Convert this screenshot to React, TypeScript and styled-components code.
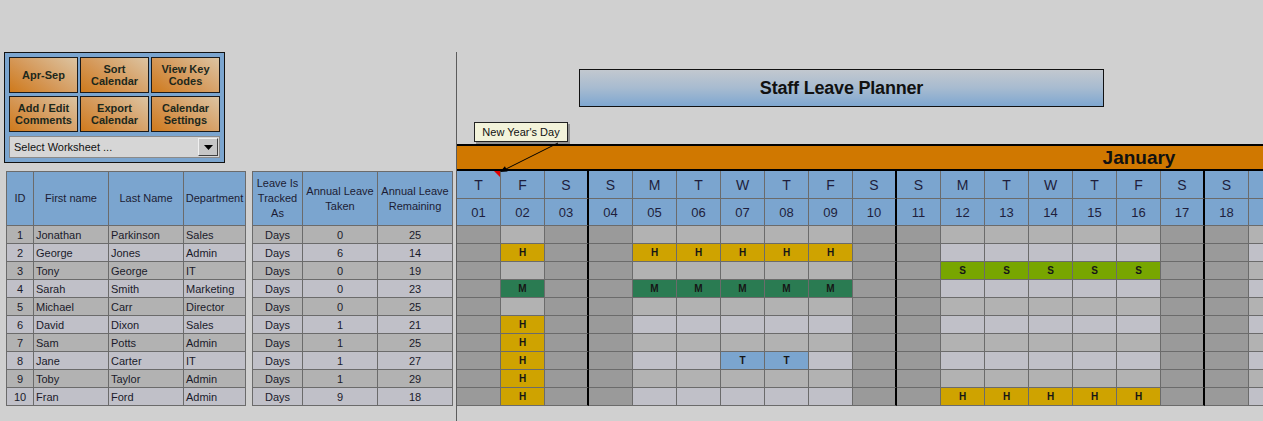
import React from "react";
import styled, { createGlobalStyle, css } from "styled-components";

type Code = "H" | "M" | "S" | "T";

type Staff = {
  id: number;
  first: string;
  last: string;
  dept: string;
  taken: number;
  remaining: number;
  leave: Record<number, Code>;
};

const span = (from: number, to: number, code: Code) => {
  const out: Record<number, Code> = {};
  for (let d = from; d <= to; d++) out[d] = code;
  return out;
};

const staff: Staff[] = [
  { id: 1, first: "Jonathan", last: "Parkinson", dept: "Sales", taken: 0, remaining: 25, leave: {} },
  { id: 2, first: "George", last: "Jones", dept: "Admin", taken: 6, remaining: 14, leave: { 2: "H", ...span(5, 9, "H") } },
  { id: 3, first: "Tony", last: "George", dept: "IT", taken: 0, remaining: 19, leave: span(12, 16, "S") },
  { id: 4, first: "Sarah", last: "Smith", dept: "Marketing", taken: 0, remaining: 23, leave: { 2: "M", ...span(5, 9, "M") } },
  { id: 5, first: "Michael", last: "Carr", dept: "Director", taken: 0, remaining: 25, leave: {} },
  { id: 6, first: "David", last: "Dixon", dept: "Sales", taken: 1, remaining: 21, leave: { 2: "H" } },
  { id: 7, first: "Sam", last: "Potts", dept: "Admin", taken: 1, remaining: 25, leave: { 2: "H" } },
  { id: 8, first: "Jane", last: "Carter", dept: "IT", taken: 1, remaining: 27, leave: { 2: "H", 7: "T", 8: "T" } },
  { id: 9, first: "Toby", last: "Taylor", dept: "Admin", taken: 1, remaining: 29, leave: { 2: "H" } },
  { id: 10, first: "Fran", last: "Ford", dept: "Admin", taken: 9, remaining: 18, leave: { 2: "H", ...span(12, 16, "H") } },
];

const LETTERS = ["S", "M", "T", "W", "T", "F", "S"];
// January starts on a Thursday
const days = Array.from({ length: 31 }, (_, i) => {
  const wd = (4 + i) % 7;
  return {
    day: i + 1,
    num: String(i + 1).padStart(2, "0"),
    letter: LETTERS[wd],
    sat: wd === 6,
    dark: wd === 0 || wd === 6 || i === 0,
  };
});

const codeColors: Record<Code, string> = {
  H: "#cfa300",
  M: "#2a7b52",
  S: "#78a600",
  T: "#7ba5cf",
};

const GRID = "#6b6b6b";
const HEAD_BLUE = "#7ba5cf";
const rowBg = (odd: boolean) => (odd ? "#b2b2b2" : "#c0c0c8");

const GlobalStyle = createGlobalStyle`
  html, body {
    margin: 0;
    padding: 0;
    background: #d0d0d0;
    overflow: hidden;
  }
  body {
    font-family: "Liberation Sans", Arial, sans-serif;
    color: #1a1a2a;
  }
  * { box-sizing: border-box; }
`;

const Page = styled.div`
  display: flex;
  height: 100vh;
  padding-top: 52px;
`;

const LeftPane = styled.div`
  width: 456px;
  flex-shrink: 0;
  display: flex;
  flex-direction: column;
`;

const RightPane = styled.div`
  position: relative;
  flex: 1;
  min-width: 0;
  overflow: hidden;
  border-left: 1px solid #5c5c5c;
`;

/* control panel */
const Panel = styled.div`
  margin-left: 4px;
  width: 221px;
  height: 111px;
  padding: 4px 4px 3px;
  background: #7ba5cf;
  border: 1px solid #111;
  display: flex;
  flex-direction: column;
  gap: 4px;
`;

const ButtonGrid = styled.div`
  display: grid;
  grid-template-columns: repeat(3, 1fr);
  grid-auto-rows: 36px;
  column-gap: 2px;
  row-gap: 3px;
`;

const ActionButton = styled.div`
  display: flex;
  align-items: center;
  justify-content: center;
  text-align: center;
  border: 1px solid #1a1a1a;
  background: linear-gradient(35deg, #cf7a1c 0%, #d5995a 45%, #dcc4a2 100%);
  font-size: 11px;
  font-weight: bold;
  line-height: 12px;
  color: #1c281c;
`;

const Dropdown = styled.div`
  height: 22px;
  display: flex;
  align-items: center;
  justify-content: space-between;
  padding: 0 1px 0 4px;
  background: #d6d6d6;
  border: 1px solid #8a8a8a;
  font-size: 11px;
  color: #111;
`;

const DropButton = styled.div`
  width: 20px;
  height: 18px;
  display: flex;
  align-items: center;
  justify-content: center;
  background: #c6c6c6;
  border: 1px solid;
  border-color: #f0f0f0 #404040 #404040 #f0f0f0;
`;

/* staff tables */
const Tables = styled.div`
  display: flex;
  gap: 6px;
  margin: 8px 0 0 6px;
`;

const Table = styled.div<{ $cols: string }>`
  display: grid;
  grid-template-columns: ${(p) => p.$cols};
  grid-auto-rows: 18px;
  border-top: 1px solid ${GRID};
  border-left: 1px solid ${GRID};
  align-self: flex-start;
`;

const HeadCell = styled.div`
  grid-row: span 3;
  height: 54px;
  display: flex;
  align-items: center;
  justify-content: center;
  text-align: center;
  background: ${HEAD_BLUE};
  border-right: 1px solid ${GRID};
  border-bottom: 1px solid ${GRID};
  font-size: 11px;
  line-height: 15px;
  color: #1c1c34;
`;

const Cell = styled.div<{ $odd: boolean; $align?: "left" | "center" }>`
  display: flex;
  align-items: center;
  justify-content: ${(p) => (p.$align === "left" ? "flex-start" : "center")};
  padding: 0 2px;
  background: ${(p) => rowBg(p.$odd)};
  border-right: 1px solid ${GRID};
  border-bottom: 1px solid ${GRID};
  font-size: 11px;
  white-space: nowrap;
  overflow: hidden;
`;

/* right side */
const Title = styled.div`
  margin: 17px 0 0 122px;
  width: 525px;
  height: 38px;
  display: flex;
  align-items: center;
  justify-content: center;
  border: 1px solid #111;
  background: linear-gradient(to bottom, #c2c8cf 0%, #a7bbd0 50%, #7fa7d0 100%);
  font-size: 18px;
  font-weight: bold;
  letter-spacing: -0.2px;
  color: #111;
`;

const Calendar = styled.div`
  margin-top: 37px;
  display: grid;
  grid-template-columns: repeat(31, 44px);
  width: 1364px;
`;

const MonthBar = styled.div`
  grid-column: 1 / -1;
  height: 27px;
  display: flex;
  align-items: center;
  justify-content: center;
  background: #d07800;
  border-top: 2px solid #000;
  border-bottom: 2px solid #000;
  font-size: 19px;
  font-weight: bold;
  color: #111;
`;

const sepBorder = css<{ $sat: boolean }>`
  border-right: ${(p) => (p.$sat ? "2px solid #000" : `1px solid ${GRID}`)};
  border-bottom: 1px solid ${GRID};
`;

const DayHead = styled.div<{ $sat: boolean; $comment?: boolean }>`
  position: relative;
  height: 28px;
  display: flex;
  align-items: center;
  justify-content: center;
  background: ${HEAD_BLUE};
  ${sepBorder};
  font-size: 14px;
  color: #1e1e3c;

  ${(p) =>
    p.$comment &&
    css`
      &::after {
        content: "";
        position: absolute;
        top: 0;
        right: 0;
        border-top: 6px solid #e00000;
        border-left: 6px solid transparent;
      }
    `}
`;

const NumHead = styled(DayHead)`
  height: 27px;
  font-size: 13px;
`;

const DayCell = styled.div<{ $sat: boolean; $dark: boolean; $odd: boolean; $code?: Code }>`
  height: 18px;
  display: flex;
  align-items: center;
  justify-content: center;
  background: ${(p) => (p.$code ? codeColors[p.$code] : p.$dark ? "#9a9a9a" : rowBg(p.$odd))};
  ${sepBorder};
  font-size: 10px;
  font-weight: bold;
  color: #161616;
`;

const Comment = styled.div`
  position: absolute;
  left: 17px;
  top: 70px;
  width: 94px;
  height: 20px;
  display: flex;
  align-items: center;
  justify-content: center;
  background: #f3f3da;
  border: 1px solid #222;
  box-shadow: 2px 2px 0 rgba(0, 0, 0, 0.3);
  font-size: 11px;
  color: #111;
  white-space: nowrap;
  z-index: 2;
`;

const Pointer = styled.svg`
  position: absolute;
  left: 0;
  top: 0;
  pointer-events: none;
  z-index: 2;
`;

export default function App() {
  return (
    <>
      <GlobalStyle />
      <Page>
        <LeftPane>
          <Panel>
            <ButtonGrid>
              <ActionButton>Apr-Sep</ActionButton>
              <ActionButton>Sort<br />Calendar</ActionButton>
              <ActionButton>View Key<br />Codes</ActionButton>
              <ActionButton>Add / Edit<br />Comments</ActionButton>
              <ActionButton>Export<br />Calendar</ActionButton>
              <ActionButton>Calendar<br />Settings</ActionButton>
            </ButtonGrid>
            <Dropdown>
              Select Worksheet ...
              <DropButton>
                <svg width="9" height="5" viewBox="0 0 9 5">
                  <polygon points="0,0 9,0 4.5,5" fill="#000" />
                </svg>
              </DropButton>
            </Dropdown>
          </Panel>

          <Tables>
            <Table $cols="27px 75px 75px 62px">
              <HeadCell>ID</HeadCell>
              <HeadCell>First name</HeadCell>
              <HeadCell>Last Name</HeadCell>
              <HeadCell>Department</HeadCell>
              {staff.map((s) => {
                const odd = s.id % 2 === 1;
                return (
                  <React.Fragment key={s.id}>
                    <Cell $odd={odd}>{s.id}</Cell>
                    <Cell $odd={odd} $align="left">{s.first}</Cell>
                    <Cell $odd={odd} $align="left">{s.last}</Cell>
                    <Cell $odd={odd} $align="left">{s.dept}</Cell>
                  </React.Fragment>
                );
              })}
            </Table>

            <Table $cols="50px 75px 75px">
              <HeadCell>Leave Is Tracked As</HeadCell>
              <HeadCell>Annual Leave Taken</HeadCell>
              <HeadCell>Annual Leave Remaining</HeadCell>
              {staff.map((s) => {
                const odd = s.id % 2 === 1;
                return (
                  <React.Fragment key={s.id}>
                    <Cell $odd={odd}>Days</Cell>
                    <Cell $odd={odd}>{s.taken}</Cell>
                    <Cell $odd={odd}>{s.remaining}</Cell>
                  </React.Fragment>
                );
              })}
            </Table>
          </Tables>
        </LeftPane>

        <RightPane>
          <Title>Staff Leave Planner</Title>

          <Calendar>
            <MonthBar>January</MonthBar>
            {days.map((d) => (
              <DayHead key={`l${d.day}`} $sat={d.sat} $comment={d.day === 1}>
                {d.letter}
              </DayHead>
            ))}
            {days.map((d) => (
              <NumHead key={`n${d.day}`} $sat={d.sat}>
                {d.num}
              </NumHead>
            ))}
            {staff.map((s) =>
              days.map((d) => {
                const code = s.leave[d.day];
                return (
                  <DayCell
                    key={`${s.id}-${d.day}`}
                    $sat={d.sat}
                    $dark={d.dark}
                    $odd={s.id % 2 === 1}
                    $code={code}
                  >
                    {code}
                  </DayCell>
                );
              })
            )}
          </Calendar>

          <Comment>New Year's Day</Comment>
          <Pointer width="120" height="130" viewBox="0 0 120 130">
            <line x1="101" y1="91" x2="48" y2="117.5" stroke="#000" strokeWidth="1" />
            <polygon points="43,120 50.6,119.5 47.9,114.2" fill="#000" />
          </Pointer>
        </RightPane>
      </Page>
    </>
  );
}
